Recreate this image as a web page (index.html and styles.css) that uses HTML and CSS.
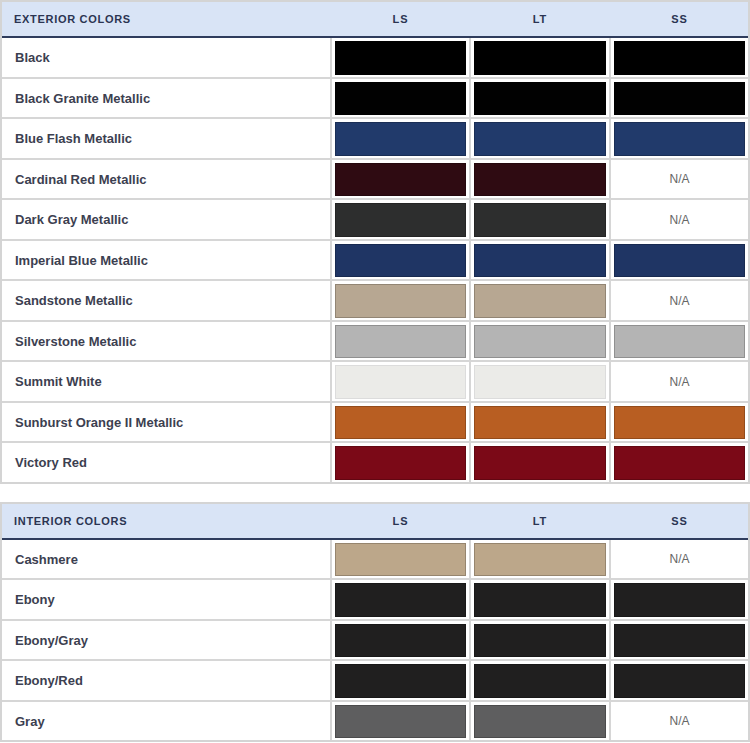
FILE: index.html
```html
<!DOCTYPE html>
<html lang="en">
<head>
<meta charset="utf-8">
<title>Colors</title>
<link rel="stylesheet" href="styles.css">
</head>
<body>
<section class="tbl">
  <div class="head">
    <div class="hcell name">EXTERIOR COLORS</div>
    <div class="hcell">LS</div>
    <div class="hcell">LT</div>
    <div class="hcell">SS</div>
  </div>
  <div class="row"><div class="cell name">Black</div><div class="cell"><span class="sw" style="background:#000000"></span></div><div class="cell"><span class="sw" style="background:#000000"></span></div><div class="cell"><span class="sw" style="background:#000000"></span></div></div>
  <div class="row"><div class="cell name">Black Granite Metallic</div><div class="cell"><span class="sw" style="background:#010101"></span></div><div class="cell"><span class="sw" style="background:#010101"></span></div><div class="cell"><span class="sw" style="background:#010101"></span></div></div>
  <div class="row"><div class="cell name">Blue Flash Metallic</div><div class="cell"><span class="sw" style="background:#213a6b"></span></div><div class="cell"><span class="sw" style="background:#213a6b"></span></div><div class="cell"><span class="sw" style="background:#213a6b"></span></div></div>
  <div class="row"><div class="cell name">Cardinal Red Metallic</div><div class="cell"><span class="sw" style="background:#2f0b12"></span></div><div class="cell"><span class="sw" style="background:#2f0b12"></span></div><div class="cell na">N/A</div></div>
  <div class="row"><div class="cell name">Dark Gray Metallic</div><div class="cell"><span class="sw" style="background:#2d2e2e"></span></div><div class="cell"><span class="sw" style="background:#2d2e2e"></span></div><div class="cell na">N/A</div></div>
  <div class="row"><div class="cell name">Imperial Blue Metallic</div><div class="cell"><span class="sw" style="background:#1f3564"></span></div><div class="cell"><span class="sw" style="background:#1f3564"></span></div><div class="cell"><span class="sw" style="background:#1f3564"></span></div></div>
  <div class="row"><div class="cell name">Sandstone Metallic</div><div class="cell"><span class="sw" style="background:#b7a792"></span></div><div class="cell"><span class="sw" style="background:#b7a792"></span></div><div class="cell na">N/A</div></div>
  <div class="row"><div class="cell name">Silverstone Metallic</div><div class="cell"><span class="sw" style="background:#b4b4b4"></span></div><div class="cell"><span class="sw" style="background:#b4b4b4"></span></div><div class="cell"><span class="sw" style="background:#b4b4b4"></span></div></div>
  <div class="row"><div class="cell name">Summit White</div><div class="cell"><span class="sw light" style="background:#ebebe8"></span></div><div class="cell"><span class="sw light" style="background:#ebebe8"></span></div><div class="cell na">N/A</div></div>
  <div class="row"><div class="cell name">Sunburst Orange II Metallic</div><div class="cell"><span class="sw" style="background:#b85e22"></span></div><div class="cell"><span class="sw" style="background:#b85e22"></span></div><div class="cell"><span class="sw" style="background:#b85e22"></span></div></div>
  <div class="row"><div class="cell name">Victory Red</div><div class="cell"><span class="sw" style="background:#7b0917"></span></div><div class="cell"><span class="sw" style="background:#7b0917"></span></div><div class="cell"><span class="sw" style="background:#7b0917"></span></div></div>
</section>

<section class="tbl second">
  <div class="head">
    <div class="hcell name">INTERIOR COLORS</div>
    <div class="hcell">LS</div>
    <div class="hcell">LT</div>
    <div class="hcell">SS</div>
  </div>
  <div class="row"><div class="cell name">Cashmere</div><div class="cell"><span class="sw" style="background:#bca78a"></span></div><div class="cell"><span class="sw" style="background:#bca78a"></span></div><div class="cell na">N/A</div></div>
  <div class="row"><div class="cell name">Ebony</div><div class="cell"><span class="sw" style="background:#201f1f"></span></div><div class="cell"><span class="sw" style="background:#201f1f"></span></div><div class="cell"><span class="sw" style="background:#201f1f"></span></div></div>
  <div class="row"><div class="cell name">Ebony/Gray</div><div class="cell"><span class="sw" style="background:#201f1f"></span></div><div class="cell"><span class="sw" style="background:#201f1f"></span></div><div class="cell"><span class="sw" style="background:#201f1f"></span></div></div>
  <div class="row"><div class="cell name">Ebony/Red</div><div class="cell"><span class="sw" style="background:#201f1f"></span></div><div class="cell"><span class="sw" style="background:#201f1f"></span></div><div class="cell"><span class="sw" style="background:#201f1f"></span></div></div>
  <div class="row"><div class="cell name">Gray</div><div class="cell"><span class="sw" style="background:#5e5e5f"></span></div><div class="cell"><span class="sw" style="background:#5e5e5f"></span></div><div class="cell na">N/A</div></div>
</section>
</body>
</html>
```

FILE: styles.css
```css
* { box-sizing: border-box; }
html, body { margin: 0; padding: 0; background: #ffffff; }
body {
  width: 750px;
  font-family: "Liberation Sans", Arial, sans-serif;
}
.tbl {
  width: 750px;
  border: 2px solid #d4d4d4;
  background: #ffffff;
}
.tbl.second { margin-top: 18px; }
.head {
  display: grid;
  grid-template-columns: 328px 137px 138px 137px;
  column-gap: 2px;
  height: 36px;
  background: #d9e4f6;
  border-bottom: 2px solid #2f3c5d;
  align-items: center;
}
.hcell {
  font-size: 11px;
  font-weight: bold;
  letter-spacing: 0.9px;
  color: #2b3452;
  text-align: center;
}
.hcell.name {
  text-align: left;
  padding-left: 12px;
  letter-spacing: 0.7px;
}
.row {
  display: grid;
  grid-template-columns: 328px 137px 138px 137px;
  column-gap: 2px;
  height: 38.5px;
  background: #d6d6d6;
}
.row + .row {
  height: 40.5px;
  border-top: 2px solid #d6d6d6;
}
.cell {
  background: #ffffff;
  padding: 3px 3px 2px 3px;
  display: flex;
  align-items: stretch;
}
.cell.name {
  align-items: center;
  padding-left: 13px;
  font-size: 13px;
  font-weight: bold;
  color: #3c4050;
}
.cell.na {
  align-items: center;
  justify-content: center;
  font-size: 12px;
  color: #666666;
}
.sw {
  display: block;
  flex: 1;
  border: 1px solid rgba(0, 0, 0, 0.2);
}
.sw.light { border-color: #dcdcdc; }
```
